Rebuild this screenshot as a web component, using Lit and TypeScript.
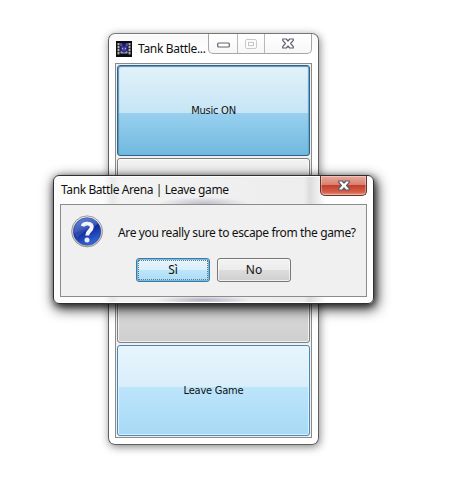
import { LitElement, html, css, svg } from "lit";
import { customElement, property } from "lit/decorators.js";

@customElement("tank-icon")
class TankIcon extends LitElement {
  static styles = css`:host { display: block; width: 16px; height: 16px; } svg { display: block; }`;
  render() {
    return html`<svg width="16" height="16" viewBox="0 0 16 16">
      <rect width="16" height="16" fill="#0b0b12" />
      ${[2, 5, 8, 11].map((y) => svg`
        <rect x="1.5" y=${y} width="2" height="2.4" fill="#b4b4bc" />
        <rect x="12.5" y=${y} width="2" height="2.4" fill="#b4b4bc" />`)}
      <rect x="4.3" y="2.5" width="7.4" height="9" fill="#2b2b80" />
      <path d="M5 2v3M11 2v3" stroke="#7878b0" stroke-width="1" />
      <path d="M4.5 12.5v-2h1.5l1 1h2l1-1h1.5v2z" fill="#a5a5b4" />
      <rect x="5.8" y="5.5" width="4.4" height="4" fill="#4a4ab0" />
      <rect x="7.4" y="1" width="1.2" height="5.5" fill="#14143c" />
      <path d="M6 7.5h1M9 7.5h1" stroke="#b3b3d6" fill="none" />
    </svg>`;
  }
}

@customElement("question-icon")
class QuestionIcon extends LitElement {
  static styles = css`:host { display: block; width: 33px; height: 33px; } svg { display: block; }`;
  render() {
    return html`<svg width="33" height="33" viewBox="0 0 33 33">
      <defs>
        <linearGradient id="rim" x2="0" y2="1">
          <stop offset="0" stop-color="#f4f4f4" /><stop offset="1" stop-color="#b5b5b9" />
        </linearGradient>
        <linearGradient id="orb" x2="0.4" y2="1">
          <stop offset="0" stop-color="#587bd2" /><stop offset=".45" stop-color="#2447b4" />
          <stop offset=".55" stop-color="#10289a" /><stop offset="1" stop-color="#2e62d6" />
        </linearGradient>
      </defs>
      <circle cx="16.1" cy="16.4" r="15.5" fill="url(#rim)" stroke="#909094" stroke-width=".9" />
      <circle cx="16.1" cy="16.4" r="13.7" fill="url(#orb)" stroke="#27418f" stroke-width=".6" />
      <path d="M3 16.5A13.3 13.3 0 0 1 27 8.5C23 14 12 15 6 23Q3 20 3 16.5Z" fill="#fff" opacity=".13" />
      <path d="M11.7 11.3C12.6 7.6 20.8 7.6 20.8 12.1C20.8 15.8 16.2 15.7 16.2 20.4" fill="none" stroke="#f2f4fa" stroke-width="3.9" />
      <circle cx="16" cy="24.9" r="2.5" fill="#e9edf6" />
    </svg>`;
  }
}

@customElement("game-button")
class GameButton extends LitElement {
  @property() label = "";
  @property({ reflect: true }) tone = "plain";
  static styles = css`
    :host { display: block; }
    .face {
      box-sizing: border-box; width: 100%; height: 100%; margin: 0; padding: 0; display: flex;
      align-items: center; justify-content: center; border-radius: 3px;
      border: 1px solid #808080; box-shadow: inset 0 0 0 1px #ffffffb0;
      background: linear-gradient(#f2f2f2, #ebebeb 50%, #dcdcdc 50%, #cfcfcf);
      font: 11px "DejaVu Sans Condensed", "DejaVu Sans", sans-serif;
      font-stretch: condensed; letter-spacing: -0.22px; color: #111;
    }
    :host([tone="pressed"]) .face {
      border-color: #2c628b;
      box-shadow: inset 1px 1px 1px #5d94b6, inset -1px 0 1px #6aa5c8;
      background: linear-gradient(#e2f2fa, #c5e5f5 53%, #98d0ee 53%, #70b9df);
    }
    :host([tone="hot"]) .face {
      border-color: #4b86b5; box-shadow: inset 0 0 0 1px #e6f7ffd0;
      background: linear-gradient(#e8f5fd, #d8eefa 46%, #bce5fb 46%, #a8d9f5);
    }
  `;
  render() {
    return html`<button class="face">${this.label}</button>`;
  }
}

@customElement("app-root")
class AppRoot extends LitElement {
  static styles = css`
    :host {
      display: block; position: relative; width: 457px; height: 481px; overflow: hidden;
      background: #fff; color: #111; font-family: "Noto Sans", "Open Sans", sans-serif;
    }
    .window { position: absolute; box-sizing: border-box; display: flex; flex-direction: column; }
    .main {
      left: 108px; top: 33px; width: 211px; height: 412px; padding: 0 6px 6px;
      border: 1px solid #606060; border-top-color: #777; border-radius: 7px;
      background: linear-gradient(#f9f9f9, #fff 20px);
      box-shadow: 1px 2px 9px #0000007a, inset 0 0 0 1px #fff;
    }
    .bar { display: flex; align-items: flex-start; flex: none; }
    .main .bar { height: 29px; }
    .main tank-icon { margin: 7px 0 0 1px; }
    .title { font-size: 12px; line-height: 16px; white-space: nowrap; }
    .main .title { margin: 7px 0 0 6px; width: 70px; letter-spacing: -0.32px; }
    .controls {
      display: flex; box-sizing: border-box; width: 104px; height: 20px; border: 1px solid #a6a6a6;
      border-top: 0; border-radius: 0 0 5px 5px; flex: none;
      background: linear-gradient(#fff, #f7f7f7);
    }
    .control { display: flex; justify-content: center; align-items: center; width: 28px; box-sizing: border-box; }
    .control + .control { border-left: 1px solid #b8b8b8; width: 27px; }
    .control:last-child { width: 47px; }
    .grid {
      flex: 1; box-sizing: border-box; border: 1px solid #8b8b8b; padding: 1px; min-height: 0;
      display: grid; grid-template-rows: 91px 91px 92px 91px; row-gap: 2px; background: #f0f0f0;
    }
    .dialog {
      left: 53px; top: 175px; width: 321px; height: 129px; padding: 0 6px 6px;
      border: 1px solid #303030; border-radius: 6px;
      box-shadow: 2px 4px 13px 1px #000000d0, 1px 2px 6px #00000080, inset 0 0 0 1px #fff;
      background:
        radial-gradient(ellipse 46px 7px at 149px 28px, #8c889c80, transparent),
        radial-gradient(ellipse 48px 4px at 149px 124px, #77729680, transparent),
        linear-gradient(90deg, #fcfcfc 50px, #e9e9e9 58px, #f3f3f3 66px, #ededed 250px, #dcdcdc 256px, #eeeeee 264px, #fff 272px);
    }
    .dialog .bar { height: 28px; justify-content: space-between; }
    .dialog .title { margin: 6px 0 0 1px; letter-spacing: -0.4px; }
    .close {
      display: flex; align-items: center; justify-content: center; box-sizing: border-box;
      width: 47px; height: 20px; border: 1px solid #65312c; border-top: 0; border-radius: 0 0 5px 5px;
      background: linear-gradient(#e9aa9c, #d98170 45%, #c23c27 46%, #d5614a 85%, #e69a82);
      box-shadow: inset 0 0 0 1px #ffffff55;
    }
    .body {
      flex: 1; box-sizing: border-box; border: 1px solid #8b8b8b; background: #f0f0f0;
      display: flex; flex-direction: column;
    }
    .message { display: flex; height: 53px; padding: 10px 0 0 10px; box-sizing: border-box; }
    .question { margin: 9px 0 0 14px; font-size: 12px; line-height: 18px; white-space: nowrap; letter-spacing: -0.37px; }
    .actions { display: flex; gap: 7px; padding-left: 75px; }
    .answer {
      position: relative; box-sizing: border-box; width: 74px; height: 24px; padding: 0; margin: 0;
      border: 1px solid #777; border-radius: 3px; color: #111;
      font: 12px/22px "Noto Sans", "Open Sans", sans-serif;
      background: linear-gradient(#f3f3f3, #ebebeb 50%, #dddddd 50%, #cfcfcf);
      box-shadow: inset 0 0 0 1px #fbfbfbc0;
    }
    .focused {
      border-color: #3f79a5; box-shadow: inset 0 0 0 1px #78b9de;
      background: linear-gradient(#e8f5fc, #d9effa 50%, #bee6fb 50%, #a9dbf6);
    }
    .focused::after { content: ""; position: absolute; inset: 1px; border: 1px dotted #607888; }
  `;
  cross(fill: string, stroke: string) {
    return html`<svg width="12" height="11" viewBox="0 0 12 11">
      <path d="M.7 1h3.6L6 3 7.7 1h3.6v1.3L8.6 5.5l2.7 3.2V10H7.7L6 8 4.3 10H.7V8.7l2.7-3.2L.7 2.3z" fill=${fill} stroke=${stroke} stroke-width="1.2" stroke-linejoin="round" />
    </svg>`;
  }
  render() {
    return html`
      <section class="window main">
        <header class="bar">
          <tank-icon></tank-icon>
          <span class="title">Tank Battle...</span>
          <div class="controls">
            <span class="control"><svg width="13" height="11" viewBox="0 0 13 11"><rect x=".7" y="5" width="11.6" height="4" rx="1" fill="#fff" stroke="#62626f" stroke-width="1.2" /></svg></span>
            <span class="control"><svg width="12" height="10" viewBox="0 0 12 10"><rect x=".6" y=".6" width="10.8" height="8.8" rx="1" fill="#fff" stroke="#c3c3c3" /><rect x="3.5" y="3.4" width="5" height="3.2" fill="#fff" stroke="#c3c3c3" /></svg></span>
            <span class="control">${this.cross("#fff", "#62626f")}</span>
          </div>
        </header>
        <div class="grid">
          <game-button tone="pressed" label="Music ON"></game-button>
          <game-button></game-button>
          <game-button></game-button>
          <game-button tone="hot" label="Leave Game"></game-button>
        </div>
      </section>
      <section class="window dialog">
        <header class="bar">
          <span class="title">Tank Battle Arena | Leave game</span>
          <span class="close">${this.cross("#fff", "#5d5663")}</span>
        </header>
        <div class="body">
          <div class="message">
            <question-icon></question-icon>
            <span class="question">Are you really sure to escape from the game?</span>
          </div>
          <div class="actions">
            <button class="answer focused">Sì</button>
            <button class="answer">No</button>
          </div>
        </div>
      </section>`;
  }
}
